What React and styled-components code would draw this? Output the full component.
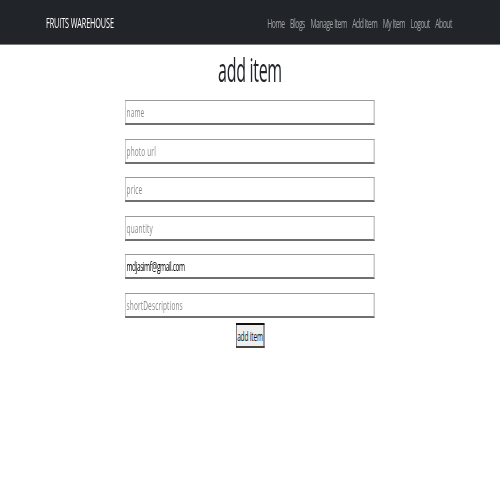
import React, { useState } from 'react';
import styled, { createGlobalStyle } from 'styled-components';

const GlobalStyle = createGlobalStyle`
  html, body {
    margin: 0;
    padding: 0;
    overflow: hidden;
    background: #fff;
  }
  body {
    font-family: 'Open Sans', 'Liberation Sans', sans-serif;
    color: #212529;
  }
`;

// the page is laid out 1000px wide and squeezed to the 500px window
const Page = styled.div`
  width: 1000px;
  transform: scaleX(0.5);
  transform-origin: 0 0;
`;

const NavBar = styled.nav`
  height: 45px;
  background: #212529;
  border-bottom: 1px solid #7a7d80;
  box-sizing: border-box;
  display: flex;
  align-items: center;
  justify-content: space-between;
  padding: 0 96px 0 92px;
`;

const Brand = styled.a`
  color: #fff;
  font-size: 14.5px;
  text-decoration: none;
  letter-spacing: -0.2px;
  padding-top: 1px;
`;

const NavLinks = styled.div`
  display: flex;
  gap: 11px;
  padding-top: 2px;
`;

const NavLink = styled.a`
  color: rgba(255, 255, 255, 0.55);
  font-size: 13.5px;
  text-decoration: none;
  letter-spacing: -0.9px;
`;

const Heading = styled.h1`
  margin: 6px 0 11px;
  text-align: center;
  font-size: 32px;
  font-weight: 500;
  line-height: 1.2;
  letter-spacing: -0.6px;
`;

const Form = styled.form`
  width: 500px;
  margin: 0 auto;
  display: flex;
  flex-direction: column;
  align-items: center;
  gap: 13.5px;
`;

const Field = styled.input`
  width: 100%;
  height: 25px;
  box-sizing: border-box;
  padding: 0 2px;
  font-family: 'Open Sans', 'Liberation Sans', sans-serif;
  font-size: 13px;
  letter-spacing: -0.8px;
  color: #000;
  background: #fff;
  border-top: 1px solid #9a9a9a;
  border-left: 1px solid #9a9a9a;
  border-bottom: 2px solid #6f6f6f;
  border-right: 3px solid #c8c8c8;
  outline: none;

  &::placeholder {
    color: #8a8a8a;
    letter-spacing: 0.3px;
  }
`;

const Submit = styled.button`
  margin-top: -8px;
  width: 58px;
  height: 25px;
  padding: 0;
  font-family: 'Open Sans', 'Liberation Sans', sans-serif;
  font-size: 13px;
  letter-spacing: -0.3px;
  color: #111;
  background: #efefef;
  border: 2px solid #111;
  border-right-color: #444;
  border-bottom-color: #444;
  cursor: pointer;
`;

const links = ['Home', 'Blogs', 'Manage Item', 'Add Item', 'My Item', 'Logout', 'About'];

const App = () => {
  const [email, setEmail] = useState('mdjasimf@gmail.com');

  return (
    <Page>
      <GlobalStyle />
      <NavBar>
        <Brand href="#">FRUITS WAREHOUSE</Brand>
        <NavLinks>
          {links.map(l => (
            <NavLink key={l} href="#">{l}</NavLink>
          ))}
        </NavLinks>
      </NavBar>
      <Heading>add item</Heading>
      <Form onSubmit={e => e.preventDefault()}>
        <Field placeholder="name" />
        <Field placeholder="photo url" />
        <Field placeholder="price" />
        <Field placeholder="quantity" />
        <Field value={email} onChange={e => setEmail(e.target.value)} />
        <Field placeholder="shortDescriptions" />
        <Submit type="submit">add item</Submit>
      </Form>
    </Page>
  );
};

export default App;
